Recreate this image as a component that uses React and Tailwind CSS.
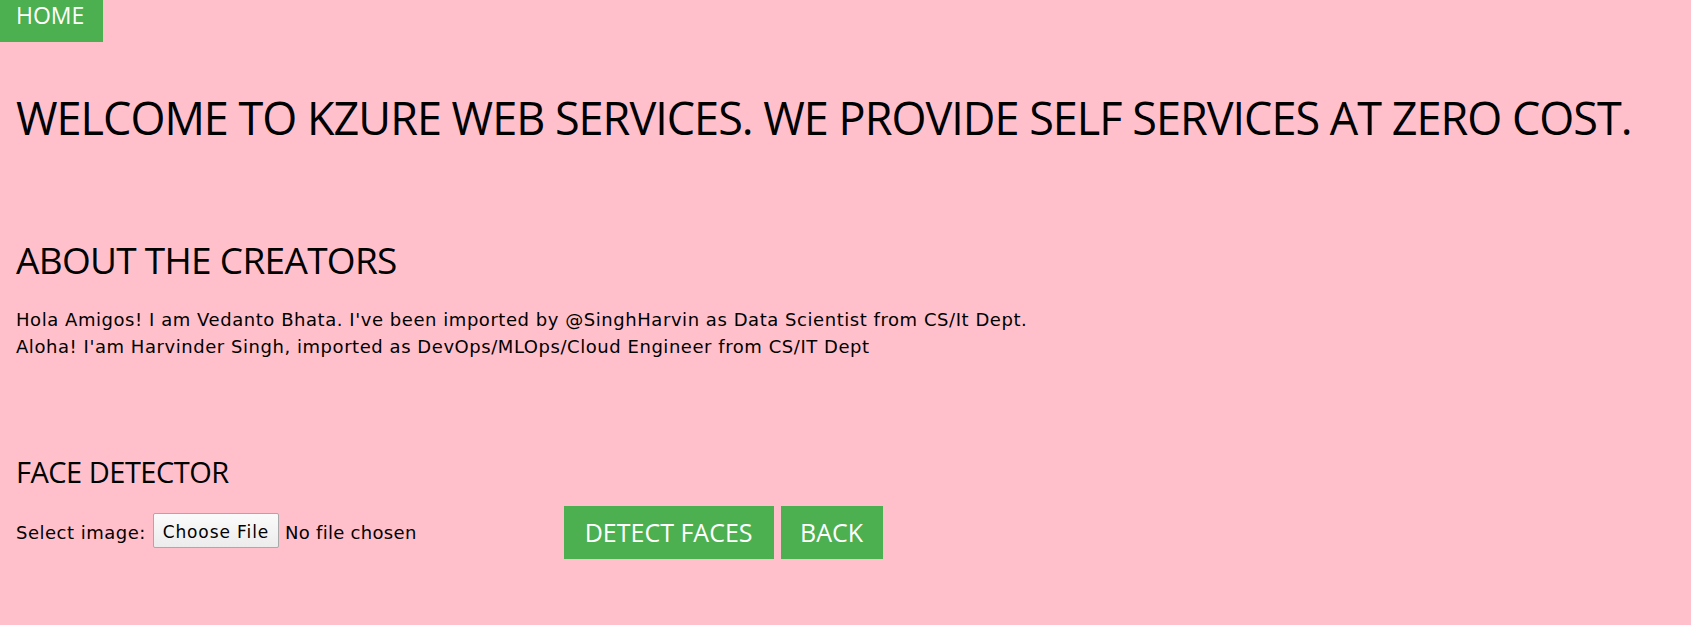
import React from 'react';

export default function App() {
  return (
    <div className="min-h-screen bg-[#ffc0cb] text-black font-['DejaVu_Sans',sans-serif]">
      <nav className="flex">
        <a
          href="#"
          className="block h-[42px] w-[103px] bg-[#4caf50] pl-4 text-[23px] leading-[30px] text-white font-['Open_Sans',sans-serif]"
        >
          HOME
        </a>
      </nav>

      <main className="px-4">
        <h1 className="mt-[52px] text-[45px] leading-[48px] tracking-[-1px] font-['Open_Sans',sans-serif]">
          WELCOME TO KZURE WEB SERVICES. WE PROVIDE SELF SERVICES AT ZERO COST.
        </h1>

        <h2 className="mt-[98px] text-[37px] leading-[40px] tracking-[-0.7px] font-['Open_Sans',sans-serif]">
          ABOUT THE CREATORS
        </h2>

        <p className="mt-[26px] text-[18px] leading-[27px] tracking-[0.55px]">
          Hola Amigos! I am Vedanto Bhata. I've been imported by @SinghHarvin as Data Scientist from CS/It Dept.
          <br />
          Aloha! I'am Harvinder Singh, imported as DevOps/MLOps/Cloud Engineer from CS/IT Dept
        </p>

        <h3 className="mt-[96px] text-[29px] leading-[32px] tracking-[-0.5px] font-['Open_Sans',sans-serif]">
          FACE DETECTOR
        </h3>

        <div className="mt-[18px] flex items-start text-[18px] leading-[27px] tracking-[0.5px]">
          <span className="mt-[13px]">Select image:</span>
          <button
            type="button"
            className="ml-[7px] mt-[7px] h-[35px] w-[126px] rounded-[2px] border border-[#a9a9a9] bg-gradient-to-b from-[#fbfbfb] to-[#ececec] pt-[4px] text-[17px] tracking-[0.9px]"
          >
            Choose File
          </button>
          <span className="ml-[6px] mt-[13px] tracking-[0.3px]">No file chosen</span>
          <button
            type="button"
            className="ml-[147px] h-[53px] w-[210px] bg-[#4caf50] text-[25px] tracking-normal text-white font-['Open_Sans',sans-serif]"
          >
            DETECT FACES
          </button>
          <button
            type="button"
            className="ml-[7px] h-[53px] w-[102px] bg-[#4caf50] text-[25px] tracking-normal text-white font-['Open_Sans',sans-serif]"
          >
            BACK
          </button>
        </div>
      </main>
    </div>
  );
}
